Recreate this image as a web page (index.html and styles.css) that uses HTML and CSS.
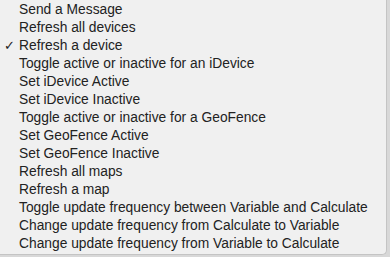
FILE: index.html
```html
<!DOCTYPE html>
<html>

<head>
  <title>Menu</title>
  <link rel="stylesheet" href="styles.css">
</head>

<body>
  <div class="menu">
    <div class="menu-item">Send a Message</div>
    <div class="menu-item">Refresh all devices</div>
    <div class="menu-item checked"><span class="check">&#10003;</span>Refresh a device</div>
    <div class="menu-item">Toggle active or inactive for an iDevice</div>
    <div class="menu-item">Set iDevice Active</div>
    <div class="menu-item">Set iDevice Inactive</div>
    <div class="menu-item">Toggle active or inactive for a GeoFence</div>
    <div class="menu-item">Set GeoFence Active</div>
    <div class="menu-item">Set GeoFence Inactive</div>
    <div class="menu-item">Refresh all maps</div>
    <div class="menu-item">Refresh a map</div>
    <div class="menu-item">Toggle update frequency between Variable and Calculate</div>
    <div class="menu-item">Change update frequency from Calculate to Variable</div>
    <div class="menu-item">Change update frequency from Variable to Calculate</div>
  </div>
</body>

</html>
```

FILE: styles.css
```css
body {
  margin: 0;
  padding: 0;
  background-color: #d8d8d8;
  font-family: "Liberation Sans", Arial, sans-serif;
  height: 257px;
  overflow: hidden;
}

.menu {
  width: 387px;
  height: 255px;
  box-sizing: border-box;
  padding-top: 1px;
  background-color: #f0f0f0;
  border-right: 1px solid #c4c4c4;
  border-bottom: 1px solid #c4c4c4;
  border-bottom-right-radius: 5px;
}

.menu-item {
  position: relative;
  height: 18px;
  line-height: 18px;
  padding-left: 19px;
  font-size: 13.8px;
  color: #222222;
  white-space: nowrap;
}

.check {
  position: absolute;
  left: 4px;
  top: 0;
  font-family: "DejaVu Sans", sans-serif;
  font-size: 13px;
  font-weight: bold;
}
```
